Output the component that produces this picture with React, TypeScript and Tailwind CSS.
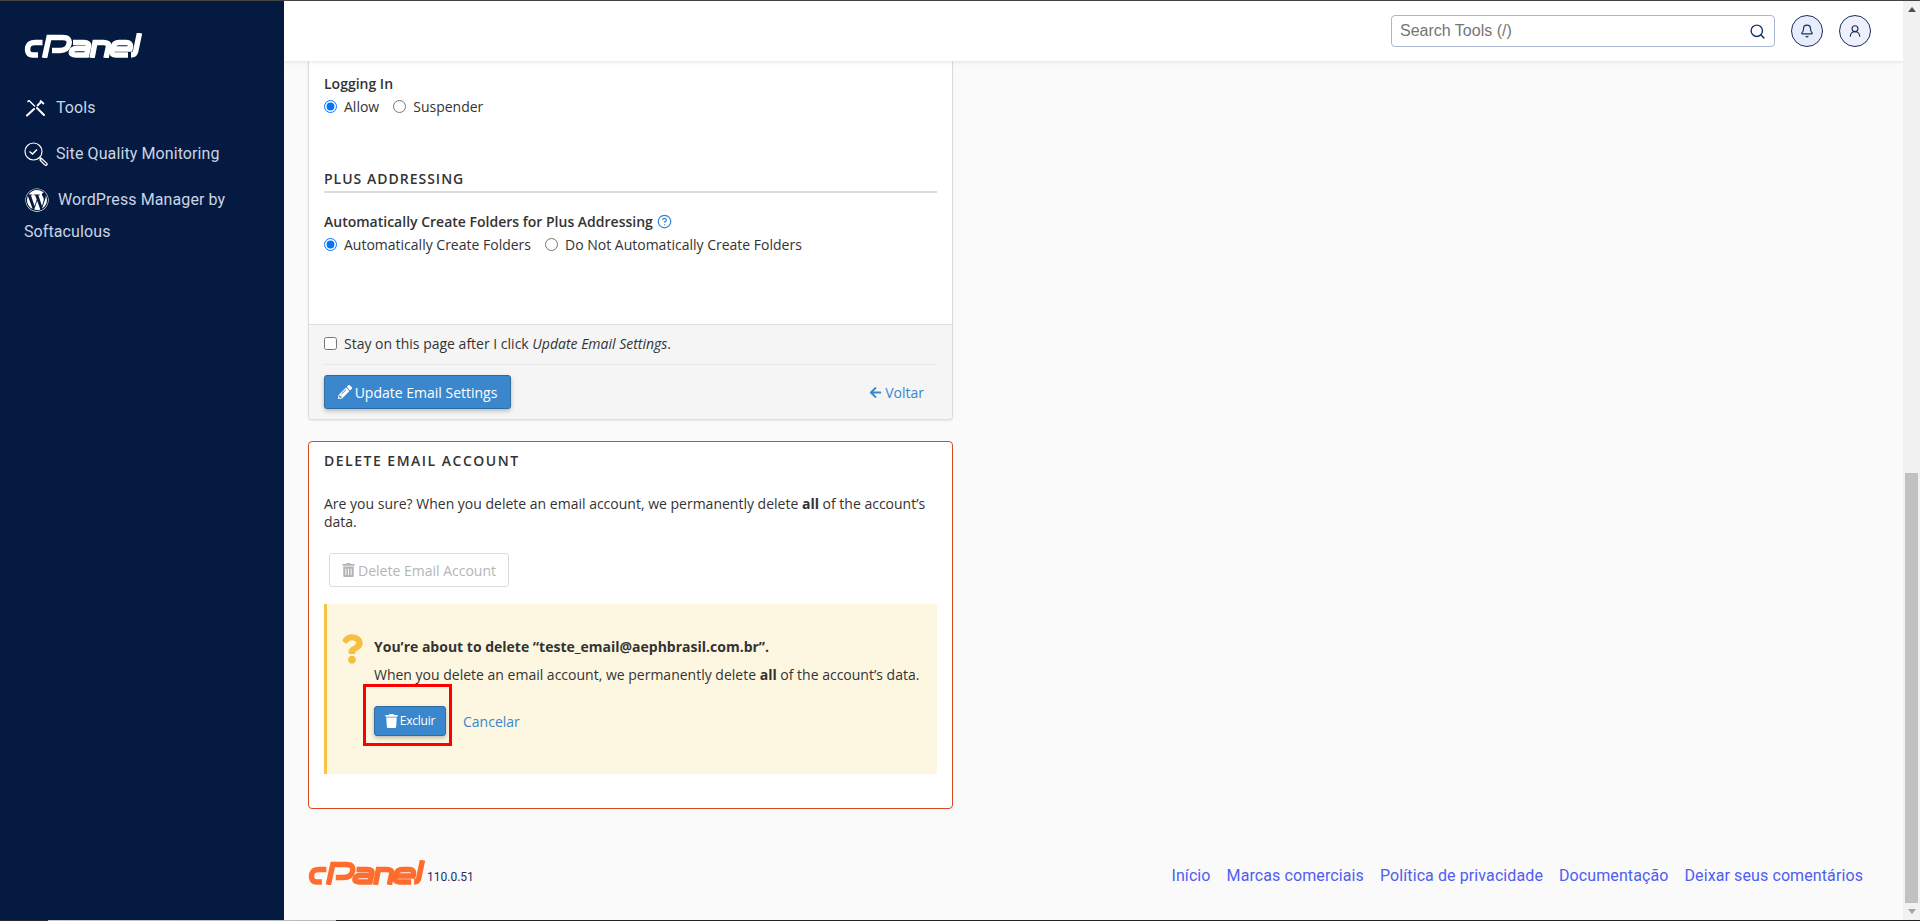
import { Bell, CircleHelp, Search, UserRound } from "lucide-react";
import { FaArrowLeft, FaPencilAlt, FaQuestion, FaTrash, FaTrashAlt, FaWordpress } from "react-icons/fa";

function CpanelLogo({ className, color }: { className: string; color: string }) {
  return (
    <svg viewBox="0 0 118 25" fill="none" stroke={color} strokeWidth="5.500" className={className}>
      <path d="M18.500 9.500H11Q5 9.500 3.800 14Q2.500 22 9 22H14" />
      <path d="M20.500 25L25 4.500H38.500Q46.500 4.500 45 11Q43.500 17.500 36 17.500H28" />
      <path d="M49 9.500H60Q65.500 9.500 64.500 13.500L62.500 22H52Q46.500 22 47.500 18.500Q48.500 15.500 53 15.500H63" />
      <path d="M68 25L71 9.500H79.500Q85.500 9.500 84.500 13.500L82 25" />
      <path d="M90 16H106Q108 9.500 102 9.500H95Q90 9.500 89 14L88 18Q87 22 92 22H104" />
      <path d="M115.500 0L111.500 19Q110.500 22 107 22" />
    </svg>
  );
}

function Sidebar() {
  return (
    <aside className="w-[284px] shrink-0 bg-[#051a40] text-[#c9d5e6] font-['Roboto',sans-serif] text-[16px] tracking-[0.1px]">
      <div className="pl-6 pt-[32px]">
        <CpanelLogo className="w-[118px] h-[25px]" color="#ffffff" />
      </div>
      <div className="mt-[38px] pl-[26px] flex items-center gap-[11px] h-[24px]">
        <svg viewBox="0 0 19 18" width="19" height="18" fill="none" stroke="#ffffff" strokeWidth="1.400">
          <path d="M1 16.500L8 10M11 9L18 16" strokeWidth="2" strokeLinecap="round" />
          <path d="M3 1.500L9 7.500M1.500 3L3 1.500" />
          <path d="M11 7L15 3M14 1.500L18 5" strokeWidth="1.800" />
        </svg>
        <span>Tools</span>
      </div>
      <div className="mt-[22px] pl-6 flex items-center gap-2 h-[24px]">
        <svg viewBox="0 0 24 24" width="24" height="24" fill="none" stroke="#ffffff" strokeWidth="1.200">
          <circle cx="9.500" cy="9.500" r="8.500" />
          <path d="M5.500 9.500L8.500 12L13 7.500" strokeWidth="1.500" />
          <path d="M15.500 15.500L17 17" />
          <path d="M17 16L23 21.500Q23.500 23 22 23.500Q21 23.500 16 18Z" />
        </svg>
        <span>Site Quality Monitoring</span>
      </div>
      <div className="mt-[22px] pl-[25px] flex items-center h-[24px]">
        <FaWordpress className="w-[24px] h-[24px] text-white" />
        <span className="ml-[9px]">WordPress Manager by</span>
      </div>
      <div className="pl-6 mt-[10px] leading-[20px]">Softaculous</div>
    </aside>
  );
}

function TopBar() {
  return (
    <header className="h-[60px] shrink-0 bg-white shadow-[0_1px_4px_rgba(0,0,0,0.1)] flex items-start pt-[14px] pl-[1107px] relative z-10">
      <div className="w-[384px] h-[32px] rounded-[4px] border border-[#a9b6cf] flex items-center justify-between pl-2 pr-[8px] font-['Liberation_Sans',sans-serif] text-[16px] text-[#757575]">
        <span>Search Tools (/)</span>
        <Search className="w-[17px] h-[17px] text-[#1b3368]" />
      </div>
      <div className="ml-[16px] w-[32px] h-[32px] rounded-full border border-[#1b2f5e] bg-[#e8ecfb] flex items-center justify-center">
        <Bell className="w-[14px] h-[14px] text-[#1b2f5e]" />
      </div>
      <div className="ml-[16px] w-[32px] h-[32px] rounded-full border border-[#1b2f5e] bg-[#eef0fb] flex items-center justify-center">
        <UserRound className="w-[14px] h-[14px] text-[#1b2f5e]" />
      </div>
    </header>
  );
}

function SettingsCard() {
  return (
    <section className="w-[645px] bg-white border-x border-b border-[#dcdcdc] rounded-b-[4px] shadow-[0_1px_2px_rgba(0,0,0,0.08)]">
      <div className="px-[15px] pt-[13px] h-[263px]">
        <div className="font-semibold leading-[20px]">Logging In</div>
        <div className="mt-[2px] flex items-center h-[20px]">
          <input type="radio" name="login" defaultChecked className="m-0" />
          <span className="ml-[7px]">Allow</span>
          <input type="radio" name="login" className="m-0 ml-[14px]" />
          <span className="ml-[7px]">Suspender</span>
        </div>
        <div className="mt-[53px] font-semibold leading-[20px] tracking-[1px]">PLUS ADDRESSING</div>
        <div className="mt-[2px] h-[2px] bg-[#dcdcdc]" />
        <div className="mt-[18px] flex items-center h-[20px] font-semibold">
          Automatically Create Folders for Plus Addressing
          <CircleHelp className="ml-[4px] w-[15px] h-[15px] text-[#3a85cc]" />
        </div>
        <div className="mt-[3px] flex items-center h-[20px]">
          <input type="radio" name="plus" defaultChecked className="m-0" />
          <span className="ml-[7px]">Automatically Create Folders</span>
          <input type="radio" name="plus" className="m-0 ml-[14px]" />
          <span className="ml-[7px]">Do Not Automatically Create Folders</span>
        </div>
      </div>
      <div className="bg-[#f5f5f5] border-t border-[#dcdcdc] px-[15px] h-[95px] rounded-b-[4px]">
        <div className="h-[40px] pb-[2px] border-b border-[#e8e8e8] flex items-center">
          <input type="checkbox" className="m-0 w-[13px] h-[13px]" />
          <span className="ml-[7px]">
            Stay on this page after I click <em>Update Email Settings</em>.
          </span>
        </div>
        <div className="mt-[10px] flex items-center justify-between">
          <button className="h-[34px] w-[187px] rounded-[3px] bg-[#3a87cd] border border-[#2e6da4] text-white flex items-center justify-center gap-[3px] shadow-[0_2px_4px_rgba(0,0,0,0.25)]">
            <FaPencilAlt className="w-[14px] h-[14px]" />
            Update Email Settings
          </button>
          <a className="mr-[13px] flex items-center gap-[3px] text-[#3a85cc]">
            <FaArrowLeft className="w-[13px] h-[13px]" />
            Voltar
          </a>
        </div>
      </div>
    </section>
  );
}

function DeleteCard() {
  return (
    <section className="mt-[21px] w-[645px] h-[368px] bg-white border border-[#d9491f] rounded-[4px] px-[15px] flow-root">
      <div className="mt-[9px] font-semibold leading-[20px] tracking-[1.500px]">DELETE EMAIL ACCOUNT</div>
      <p className="mt-[24px] leading-[18px]">
        Are you sure? When you delete an email account, we permanently delete <strong>all</strong> of the account’s data.
      </p>
      <button className="mt-[22px] ml-[5px] h-[34px] w-[180px] rounded-[3px] border border-[#dcdcdc] text-[#b5b5b5] flex items-center justify-center gap-[3px]">
        <FaTrashAlt className="w-[13px] h-[14px]" />
        Delete Email Account
      </button>
      <div className="mt-[17px] h-[170px] bg-[#fdf7e1] border-l-[3px] border-[#f6c445] pl-[14px] pt-[29px] flex">
        <FaQuestion className="w-[22px] h-[36px] -mt-[2px] text-[#f5bf42] shrink-0" />
        <div className="ml-[11px]">
          <div className="font-bold leading-[20px] mt-[4px]">You’re about to delete “teste_email@aephbrasil.com.br”.</div>
          <div className="mt-[8px] leading-[20px] whitespace-nowrap">
            When you delete an email account, we permanently delete <strong>all</strong> of the account’s data.
          </div>
          <div className="mt-[21px] flex items-center relative">
            <button className="w-[72px] h-[30px] rounded-[3px] bg-[#3a87cd] border border-[#2e6da4] text-white text-[12px] tracking-[-0.2px] flex items-center justify-center gap-[2px] shadow-[0_2px_4px_rgba(0,0,0,0.25)]">
              <FaTrash className="w-[13px] h-[14px]" />
              Excluir
            </button>
            <a className="ml-[17px] text-[#3a85cc]">Cancelar</a>
            <div className="absolute -left-[11px] -top-[22px] w-[89px] h-[62px] border-[3px] border-[#ff0000]" />
          </div>
        </div>
      </div>
    </section>
  );
}

function PageFooter() {
  return (
    <footer className="mt-[51px] flex items-start justify-between pr-[40px]">
      <div className="flex items-end">
        <CpanelLogo className="w-[117px] h-[25px]" color="#ff6c2c" />
        <span className="ml-[2px] text-[12px] leading-[16px] text-[#1b2f5e] font-['Roboto',sans-serif]">110.0.51</span>
      </div>
      <nav className="mt-[6px] flex gap-[16px] text-[16px] leading-[20px] tracking-[0.1px] text-[#4f5df0] font-['Roboto',sans-serif]">
        <a>Início</a>
        <a>Marcas comerciais</a>
        <a>Política de privacidade</a>
        <a>Documentação</a>
        <a>Deixar seus comentários</a>
      </nav>
    </footer>
  );
}

function Scrollbar() {
  return (
    <div className="w-[17px] shrink-0 bg-[#f1f1f1] flex flex-col items-center justify-between relative z-20">
      <div className="mt-[6px] border-x-[4px] border-x-transparent border-b-[5px] border-b-[#505050]" />
      <div className="mt-auto w-[13px] h-[430px] bg-[#c1c1c1]" />
      <div className="my-[6px] border-x-[4px] border-x-transparent border-t-[5px] border-t-[#a3a3a3]" />
    </div>
  );
}

export default function App() {
  return (
    <div className="h-[921px] overflow-hidden flex flex-col bg-white">
      <div className="h-px shrink-0 bg-[#444444]" />
      <div className="flex-1 min-h-0 flex">
        <Sidebar />
        <main className="flex-1 min-w-0 flex flex-col bg-[#fafafa]">
          <TopBar />
          <div className="pl-[24px] font-['Open_Sans',sans-serif] text-[14px] text-[#333333]">
            <SettingsCard />
            <DeleteCard />
            <PageFooter />
          </div>
        </main>
        <Scrollbar />
      </div>
      <div className="h-px shrink-0 bg-[linear-gradient(to_right,#2a2a2a_48px,#c8c8d0_48px,#bbbbbb_336px,#222222_336px)]" />
    </div>
  );
}
